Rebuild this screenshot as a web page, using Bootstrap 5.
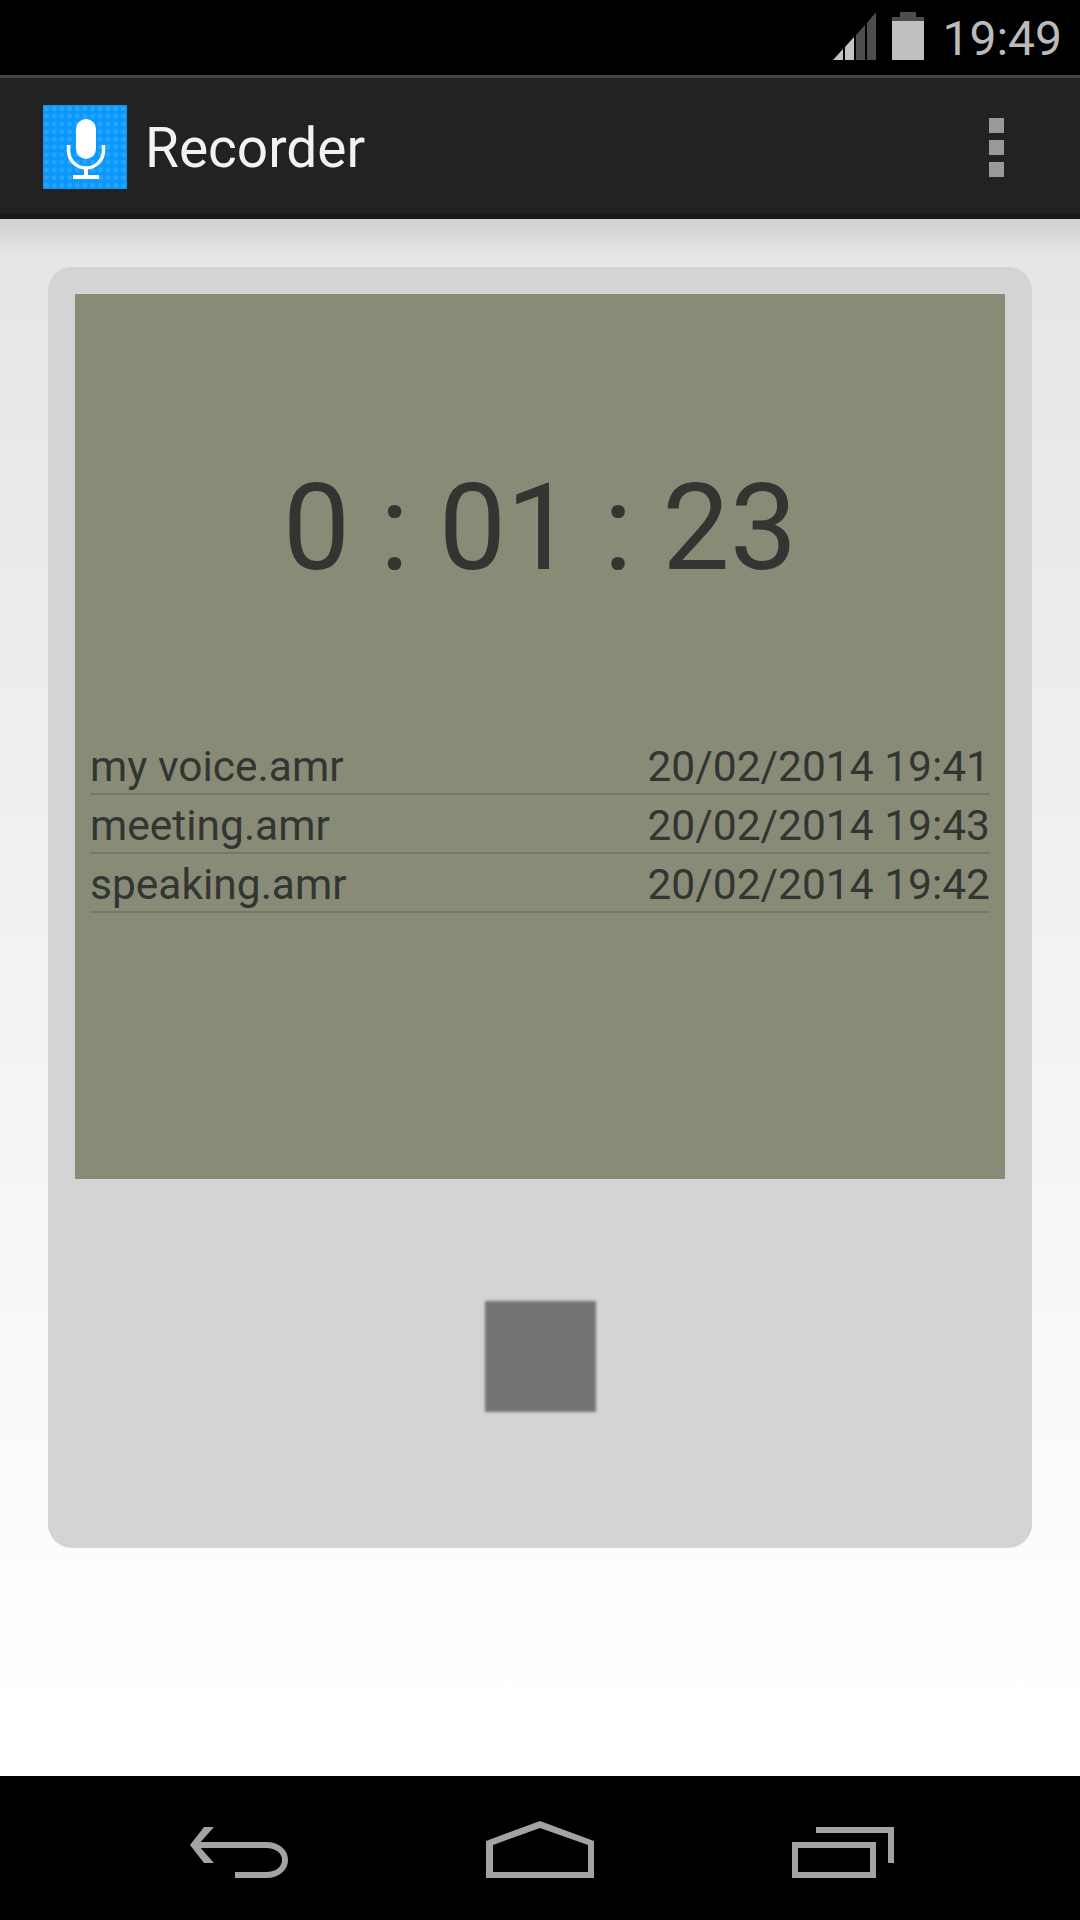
<!DOCTYPE html>
<html lang="en">
<head>
    <meta charset="UTF-8">
    <meta name="viewport" content="width=device-width, initial-scale=1.0">
    <title>Recorder</title>

    <!-- Bootstrap CSS -->
    <link rel="stylesheet" href="https://cdn.jsdelivr.net/npm/bootstrap@5.3.0/dist/css/bootstrap.min.css">
    <style>
        body { width: 1080px; height: 1920px; font-family: Roboto, sans-serif; background: #000; overflow: hidden; }
        .status-bar { height: 75px; background: #000; color: #bbb; font-size: 48px; line-height: 1; padding: 12px 18px 0 0; gap: 16px; }
        .status-time { margin-left: 2px; margin-top: 3px; }
        .action-bar { height: 144px; background: #222; border-top: 3px solid #444; border-bottom: 6px solid #191919; padding: 3px 76px 0 43px; color: #f2f2f2; }
        .action-title { font-size: 55px; margin-left: 18px; margin-top: 3px; line-height: 1; }
        .menu-dot { width: 15px; height: 15px; background: #999; }
        .menu-dots { gap: 7px; }
        .content-area { height: 1557px; padding: 48px 48px 0; background: linear-gradient(#cfcfcf 0, #e6e6e6 36px, #fff 1500px); }
        .recorder-box { height: 1281px; padding: 27px; background: #d3d5d4; border-radius: 24px; }
        .lcd-panel { height: 885px; background: #888c77; color: #333533; padding: 0 15px; }
        .timer-text { font-size: 120px; line-height: 1; height: 442px; padding-top: 174px; }
        .file-row { height: 59px; font-size: 42.5px; line-height: 1; border-bottom: 2px solid #75796a; padding-bottom: 5px; }
        .stop-area { height: 342px; padding: 13px 0 0 1px; }
        .stop-btn { width: 111px; height: 111px; background: #727473; filter: blur(1.5px); }
        .nav-bar { height: 144px; background: #000; padding: 45px 0 0 190px; gap: 198px; }
    </style>
</head>
<body>

    <!-- Status bar -->
    <div class="status-bar d-flex justify-content-end align-items-start">
        <svg width="43" height="48" viewBox="0 0 43 48">
            <polygon points="0,48 10,37 10,48" fill="#c4c4c4"/>
            <polygon points="12,35 21,25 21,48 12,48" fill="#c4c4c4"/>
            <polygon points="23,23 32,13 32,48 23,48" fill="#4d4d4d"/>
            <polygon points="34,11 43,0 43,48 34,48" fill="#4d4d4d"/>
        </svg>
        <svg width="32" height="48" viewBox="0 0 32 48">
            <rect x="8" y="0" width="16" height="6" fill="#4d4d4d"/>
            <rect x="0" y="5" width="32" height="5" fill="#4d4d4d"/>
            <rect x="0" y="9" width="32" height="39" fill="#c0c0c0"/>
        </svg>
        <span class="status-time">19:49</span>
    </div>

    <!-- Action bar -->
    <div class="action-bar d-flex align-items-center">
        <svg width="84" height="84" viewBox="0 0 84 84">
            <defs>
                <pattern id="dots" width="7.67" height="7.67" patternUnits="userSpaceOnUse">
                    <rect x="1.5" y="1.5" width="4.2" height="4.2" fill="#2ba6ff"/>
                </pattern>
            </defs>
            <rect width="84" height="84" fill="#0a98ff"/>
            <rect width="84" height="84" fill="url(#dots)"/>
            <rect x="33" y="14" width="20" height="40" rx="10" fill="#fff"/>
            <path d="M25.5 40v5.5a17.5 17.5 0 0 0 35 0V40" fill="none" stroke="#fff" stroke-width="3.5"/>
            <rect x="41" y="62" width="4" height="10" fill="#fff"/>
            <rect x="30" y="70" width="26" height="4" fill="#fff"/>
        </svg>
        <span class="action-title">Recorder</span>
        <div class="menu-dots d-flex flex-column ms-auto">
            <div class="menu-dot"></div>
            <div class="menu-dot"></div>
            <div class="menu-dot"></div>
        </div>
    </div>

    <!-- Main content -->
    <div class="content-area">
        <div class="recorder-box">
            <div class="lcd-panel">
                <div class="timer-text text-center">0 : 01 : 23</div>
                <div class="file-row d-flex justify-content-between align-items-end"><span>my voice.amr</span><span>20/02/2014 19:41</span></div>
                <div class="file-row d-flex justify-content-between align-items-end"><span>meeting.amr</span><span>20/02/2014 19:43</span></div>
                <div class="file-row d-flex justify-content-between align-items-end"><span>speaking.amr</span><span>20/02/2014 19:42</span></div>
            </div>
            <div class="stop-area d-flex justify-content-center align-items-center">
                <div class="stop-btn"></div>
            </div>
        </div>
    </div>

    <!-- Navigation bar -->
    <div class="nav-bar d-flex align-items-start">
        <svg width="98" height="57" viewBox="190 1821 98 57">
            <polygon points="204,1827 214,1827 198,1845 214,1863 204,1863 190,1845" fill="#a3a3a3"/>
            <path d="M195 1845H266C278 1845 285 1852 285 1860C285 1868 278 1875 266 1875H235" fill="none" stroke="#a3a3a3" stroke-width="6"/>
        </svg>
        <svg width="108" height="57" viewBox="486 1821 108 57">
            <path d="M486 1841L540 1821L594 1841V1878H486ZM493 1845V1872H588V1845L540 1828Z" fill="#a3a3a3" fill-rule="evenodd"/>
        </svg>
        <svg width="102" height="57" viewBox="792 1821 102 57">
            <path d="M792 1842H876V1878H792ZM798 1848V1872H870V1848Z" fill="#a3a3a3" fill-rule="evenodd"/>
            <polygon points="816,1827 894,1827 894,1863 888,1863 888,1833 816,1833" fill="#a3a3a3"/>
        </svg>
    </div>

</body>
</html>
